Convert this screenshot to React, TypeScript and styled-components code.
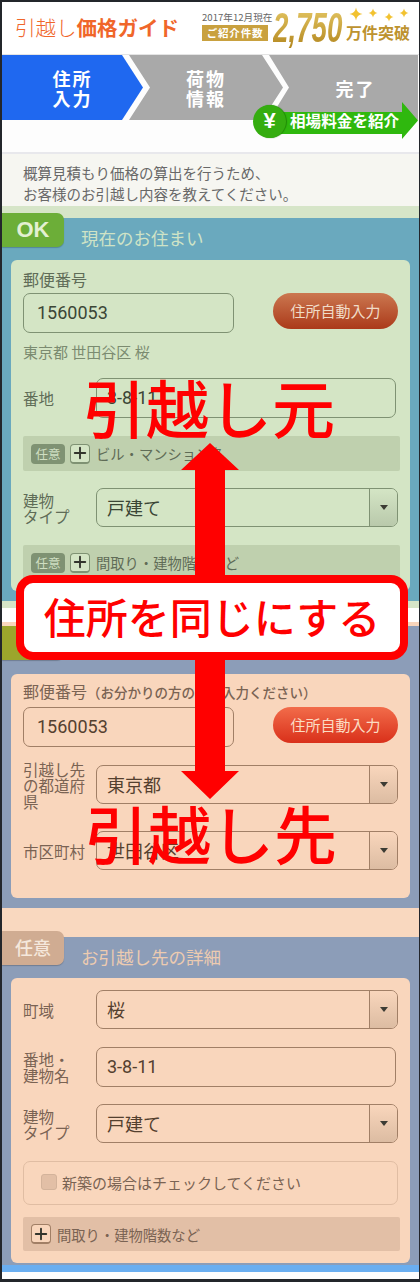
import React from "react";
import styled, { createGlobalStyle } from "styled-components";
import { Plus } from "lucide-react";

const GlobalStyle = createGlobalStyle`
  html, body {
    margin: 0;
    padding: 0;
    background: #ffffff;
  }
  * {
    box-sizing: border-box;
  }
`;

const JP = `"Noto Sans CJK JP", "Noto Sans", sans-serif`;

const tones = {
  green: `
    --card: #d4e5c5;
    --line: #7f9273;
    --ink: #5f6c57;
    --value: #3b4636;
    --bar: #bfd0ae;
    --chip: #7f9273;
    --chip-ink: #cfdfc2;
    --btn: linear-gradient(#cb7750, #ab3a1a);
    --btn-ink: #f0dcc8;
    --arrow: linear-gradient(#d4e5c5, #b9c9ab);
  `,
  peach: `
    --card: #f9d6bc;
    --line: #a17f66;
    --ink: #7a6353;
    --value: #54402f;
    --bar: #e2bfa6;
    --chip: #a17f66;
    --chip-ink: #f9d6bc;
    --btn: linear-gradient(#f26c4a, #d9301a);
    --btn-ink: #fbdcc4;
    --arrow: linear-gradient(#f9d6bc, #dcbca2);
  `,
};

const Page = styled.div`
  position: relative;
  width: 420px;
  height: 1282px;
  border: solid #23262b;
  border-width: 2px 1px 3px 2px;
  background: #fdfdfd;
  font-family: ${JP};
  overflow: hidden;
`;

const Header = styled.header`
  display: flex;
  align-items: flex-start;
  height: 53px;
  background: #ffffff;
  border-bottom: 1px solid #e4e4e4;
`;

const Logo = styled.div`
  margin: 12px 0 0 13px;
  width: 187px;
  font-size: 20.5px;
  line-height: 26px;
  font-weight: 300;
  color: #f0662a;
  white-space: nowrap;
  b {
    font-weight: 700;
  }
`;

const DateBlock = styled.div`
  display: flex;
  flex-direction: column;
  width: 66px;
`;

const AsOf = styled.span`
  margin-top: 8px;
  height: 15px;
  font-size: 9.6px;
  line-height: 15px;
  color: #666666;
  white-space: nowrap;
`;

const GoldTag = styled.span`
  height: 16px;
  background: #c9a13f;
  color: #ffffff;
  font-size: 10.5px;
  line-height: 16px;
  font-weight: 700;
  text-align: center;
  letter-spacing: 0.8px;
  white-space: nowrap;
`;

const BigCount = styled.div`
  flex: none;
  width: 106px;
  margin: 6px -33px 0 5px;
  font-family: "Liberation Sans", sans-serif;
  font-size: 42px;
  line-height: 40px;
  font-weight: 700;
  font-style: italic;
  white-space: nowrap;
  transform: scaleX(0.66);
  transform-origin: left center;
  background: linear-gradient(#e3c562, #b3871f);
  -webkit-background-clip: text;
  background-clip: text;
  color: transparent;
`;

const CountSide = styled.div`
  display: flex;
  flex-direction: column;
`;

const Stars = styled.svg`
  display: block;
  width: 68px;
  height: 15px;
  margin-top: 5px;
`;

const CountUnit = styled.span`
  font-size: 16px;
  line-height: 20px;
  font-weight: 700;
  color: #bd932f;
  white-space: nowrap;
`;

const Steps = styled.nav`
  display: flex;
  height: 65px;
`;

const Step = styled.div<{ $active?: boolean; $width: number; $first?: boolean; $last?: boolean }>`
  display: flex;
  align-items: center;
  justify-content: center;
  flex: none;
  width: ${(p) => p.$width}px;
  margin-left: ${(p) => (p.$first ? 0 : -14)}px;
  padding-left: ${(p) => (p.$last ? 24 : 0)}px;
  background: ${(p) => (p.$active ? "#1f68f0" : "#a9a9a9")};
  color: #ffffff;
  font-size: 18px;
  line-height: 20px;
  font-weight: 700;
  letter-spacing: 2px;
  text-align: center;
  clip-path: ${(p) =>
    p.$first
      ? "polygon(0 0, calc(100% - 21px) 0, 100% 50%, calc(100% - 21px) 100%, 0 100%)"
      : p.$last
        ? "polygon(0 0, 100% 0, 100% 100%, 0 100%, 20px 50%)"
        : "polygon(0 0, calc(100% - 21px) 0, 100% 50%, calc(100% - 21px) 100%, 0 100%, 21px 50%)"};
`;

const PriceBadge = styled.div`
  position: absolute;
  left: 251px;
  top: 100px;
  width: 165px;
  height: 37px;
`;

const PriceArrow = styled.div`
  position: absolute;
  left: 14px;
  top: 0;
  width: 151px;
  height: 37px;
  padding: 0 0 0 23px;
  background: #2fb80e;
  color: #ffffff;
  font-size: 15.6px;
  font-weight: 700;
  line-height: 37px;
  white-space: nowrap;
  clip-path: polygon(0 10px, 135px 10px, 135px 0, 100% 50%, 135px 100%, 135px 32px, 0 32px);
`;

const Yen = styled.div`
  position: absolute;
  left: 0;
  top: 3px;
  width: 33px;
  height: 33px;
  border-radius: 50%;
  background: #35ad10;
  box-shadow: 1px 0 1px #1f8a06;
  color: #ffffff;
  font-family: "Liberation Sans", sans-serif;
  font-size: 22px;
  font-weight: 700;
  line-height: 32px;
  text-align: center;
`;

const Spacer = styled.div`
  height: 34px;
  border-bottom: 2px solid #e8e8ec;
`;

const Intro = styled.p`
  margin: 0;
  height: 52px;
  padding: 8px 0 0 21px;
  background: #f6f6f1;
  color: #686868;
  font-size: 14.5px;
  line-height: 21px;
  white-space: nowrap;
`;

const Band = styled.div<{ $color: string; $height: number }>`
  height: ${(p) => p.$height}px;
  background: ${(p) => p.$color};
`;

const Section = styled.section<{ $color: string; $bottom: number }>`
  background: ${(p) => p.$color};
  padding: 0 9px ${(p) => p.$bottom}px;
`;

const SectionHead = styled.div<{ $height: number }>`
  display: flex;
  height: ${(p) => p.$height}px;
  margin-left: -9px;
`;

const Tab = styled.div<{ $color: string; $ink: string; $lift: number }>`
  flex: none;
  width: 62px;
  height: 34px;
  margin-top: ${(p) => -p.$lift}px;
  border-radius: 0 7px 7px 0;
  background: ${(p) => p.$color};
  box-shadow: 0 1px 1px rgba(0, 0, 0, 0.2);
  color: ${(p) => p.$ink};
  font-size: 18px;
  font-weight: 500;
  line-height: 32px;
  text-align: center;
  position: relative;
  z-index: 1;
`;

const OkMark = styled.span`
  font-family: "Liberation Sans", sans-serif;
  font-size: 22px;
  font-weight: 700;
`;

const SectionTitle = styled.h2<{ $ink: string }>`
  margin: 8px 0 0 17px;
  color: ${(p) => p.$ink};
  font-size: 17.5px;
  font-weight: 400;
  line-height: 24px;
  white-space: nowrap;
`;

const Card = styled.div<{ $tone: keyof typeof tones; $top: number; $bottom: number }>`
  ${(p) => tones[p.$tone]}
  padding: ${(p) => p.$top}px 10px ${(p) => p.$bottom}px 12px;
  border-radius: 6px;
  background: var(--card);
  color: var(--ink);
`;

const FieldLabel = styled.div`
  height: 20px;
  font-size: 16px;
  line-height: 20px;
  white-space: nowrap;
  small {
    font-size: 13.5px;
    font-weight: 500;
  }
`;

const ZipRow = styled.div<{ $top: number }>`
  display: flex;
  justify-content: space-between;
  align-items: flex-start;
  margin-top: ${(p) => p.$top}px;
  padding-right: 2px;
`;

const TextBox = styled.div<{ $zip?: boolean }>`
  flex: ${(p) => (p.$zip ? "none" : "1")};
  width: ${(p) => (p.$zip ? "211px" : "auto")};
  height: 40px;
  margin-right: ${(p) => (p.$zip ? 0 : 4)}px;
  padding-left: ${(p) => (p.$zip ? 13 : 10)}px;
  border: 1.5px solid var(--line);
  border-radius: 7px;
  color: var(--value);
  font-family: Roboto, sans-serif;
  font-size: 18px;
  line-height: 38px;
`;

const AutoButton = styled.button`
  width: 125px;
  height: 36px;
  padding: 0;
  border: none;
  border-radius: 18px;
  background: var(--btn);
  color: var(--btn-ink);
  font-family: ${JP};
  font-size: 15px;
  line-height: 32px;
`;

const Resolved = styled.div`
  margin-top: 9px;
  height: 20px;
  font-size: 15px;
  line-height: 20px;
  color: #7b8b70;
  white-space: nowrap;
`;

const Row = styled.div<{ $top: number }>`
  display: grid;
  grid-template-columns: 73px 1fr;
  align-items: center;
  margin-top: ${(p) => p.$top}px;
`;

const RowLabel = styled.div`
  margin: -6px 0;
  font-size: 15.5px;
  line-height: 16px;
  white-space: pre-line;
`;

const SelectBox = styled.div`
  display: flex;
  height: 39px;
  margin-right: 2px;
  border: 1.5px solid var(--line);
  border-radius: 7px;
  overflow: hidden;
  color: var(--value);
  font-size: 18px;
  line-height: 36px;
`;

const SelectValue = styled.span`
  flex: 1;
  padding-left: 10px;
`;

const SelectArrow = styled.span`
  display: flex;
  align-items: center;
  justify-content: center;
  width: 28px;
  border-left: 1.5px solid var(--line);
  background: var(--arrow);
  &::after {
    content: "";
    border-style: solid;
    border-width: 5px 4.5px 0;
    border-color: #3c3c34 transparent transparent;
  }
`;

const Bar = styled.div<{ $top: number; $height: number }>`
  display: flex;
  align-items: center;
  height: ${(p) => p.$height}px;
  margin-top: ${(p) => p.$top}px;
  padding-left: 8px;
  border-radius: 2px;
  background: var(--bar);
  font-size: 14.3px;
  white-space: nowrap;
`;

const Chip = styled.span`
  width: 34px;
  height: 20px;
  margin-right: 5px;
  border-radius: 4px;
  background: var(--chip);
  color: var(--chip-ink);
  font-size: 12.5px;
  line-height: 19px;
  text-align: center;
`;

const PlusButton = styled.span`
  display: flex;
  align-items: center;
  justify-content: center;
  width: 20px;
  height: 20px;
  margin-right: 6px;
  border: 1px solid var(--line);
  border-bottom-width: 2px;
  border-radius: 4px;
  background: var(--card);
  color: #33352d;
`;

const CheckPanel = styled.label`
  display: flex;
  align-items: center;
  height: 44px;
  margin: 18px 2px 0 0;
  padding: 0 0 2px 17px;
  border: 1px solid #e0bda3;
  border-radius: 7px;
  font-size: 15px;
  white-space: nowrap;
`;

const CheckBox = styled.span`
  width: 16px;
  height: 16px;
  margin-right: 5px;
  border: 1px solid #d3b39b;
  border-radius: 3px;
  background: #e2bfa6;
`;

const Overlay = styled.div`
  position: absolute;
  inset: -2px 0 0 -2px;
  z-index: 2;
  pointer-events: none;
  color: #ff0000;
`;

const DoubleArrow = styled.svg`
  position: absolute;
  left: 181px;
  top: 443px;
  width: 58px;
  height: 356px;
`;

const BigWord = styled.div<{ $left: number; $top: number }>`
  position: absolute;
  left: ${(p) => p.$left}px;
  top: ${(p) => p.$top}px;
  font-size: 63px;
  font-weight: 500;
  line-height: 70px;
  white-space: nowrap;
`;

const SameBox = styled.div`
  position: absolute;
  left: 16px;
  top: 575px;
  width: 392px;
  height: 85px;
  border: 8px solid #ff0000;
  border-radius: 17px;
  background: #ffffff;
  font-size: 42px;
  font-weight: 500;
  line-height: 65px;
  text-align: center;
  white-space: nowrap;
`;

const star = (x: number, y: number, r: number) =>
  `M${x} ${y - r}Q${x + 0.8} ${y - 0.8} ${x + r} ${y}Q${x + 0.8} ${y + 0.8} ${x} ${y + r}Q${x - 0.8} ${y + 0.8} ${x - r} ${y}Q${x - 0.8} ${y - 0.8} ${x} ${y - r}Z`;

const App = () => {
  return (
    <Page>
      <GlobalStyle />
      <Header>
        <Logo>
          引越し<b>価格ガイド</b>
        </Logo>
        <DateBlock>
          <AsOf>2017年12月現在</AsOf>
          <GoldTag>ご紹介件数</GoldTag>
        </DateBlock>
        <BigCount>2,750</BigCount>
        <CountSide>
          <Stars viewBox="0 0 68 15">
            <path d={star(10, 7, 6.5)} fill="#f2c230" />
            <path d={star(27, 6, 4.5)} fill="#f2c230" />
            <path d={star(43, 10, 4.5)} fill="#f2c230" />
            <path d={star(58, 6, 4.5)} fill="#f2c230" />
          </Stars>
          <CountUnit>万件突破</CountUnit>
        </CountSide>
      </Header>

      <Steps>
        <Step $active $first $width={141}>
          住所
          <br />
          入力
        </Step>
        <Step $width={154}>
          荷物
          <br />
          情報
        </Step>
        <Step $last $width={149}>
          完了
        </Step>
      </Steps>
      <PriceBadge>
        <PriceArrow>相場料金を紹介</PriceArrow>
        <Yen>¥</Yen>
      </PriceBadge>

      <Spacer />
      <Intro>
        概算見積もり価格の算出を行うため、
        <br />
        お客様のお引越し内容を教えてください。
      </Intro>
      <Band $color="#d6e5c8" $height={12} />

      <Section $color="#6aa9be" $bottom={10}>
        <SectionHead $height={42}>
          <Tab $color="#6cae38" $ink="#e3f0d2" $lift={5}>
            <OkMark>OK</OkMark>
          </Tab>
          <SectionTitle $ink="#cfe3c6">現在のお住まい</SectionTitle>
        </SectionHead>
        <Card $tone="green" $top={9} $bottom={11}>
          <FieldLabel>郵便番号</FieldLabel>
          <ZipRow $top={4}>
            <TextBox $zip>1560053</TextBox>
            <AutoButton>住所自動入力</AutoButton>
          </ZipRow>
          <Resolved>東京都 世田谷区 桜</Resolved>
          <Row $top={16}>
            <RowLabel>番地</RowLabel>
            <TextBox>3-8-11</TextBox>
          </Row>
          <Bar $top={18} $height={35}>
            <Chip>任意</Chip>
            <PlusButton>
              <Plus size={18} strokeWidth={2.5} />
            </PlusButton>
            ビル・マンション名
          </Bar>
          <Row $top={17}>
            <RowLabel>{"建物\nタイプ"}</RowLabel>
            <SelectBox>
              <SelectValue>戸建て</SelectValue>
              <SelectArrow />
            </SelectBox>
          </Row>
          <Bar $top={18} $height={35}>
            <Chip>任意</Chip>
            <PlusButton>
              <Plus size={18} strokeWidth={2.5} />
            </PlusButton>
            間取り・建物階数など
          </Bar>
        </Card>
      </Section>

      <Band $color="#d6e5c8" $height={7} />
      <Band $color="#ffffff" $height={14} />
      <Band $color="#f9d6bc" $height={4} />

      <Section $color="#8c9db8" $bottom={10}>
        <SectionHead $height={48}>
          <Tab $color="#9ca62c" $ink="#e3e6b8" $lift={0}>
            OK
          </Tab>
          <SectionTitle $ink="#f2d3bc">お引越し先</SectionTitle>
        </SectionHead>
        <Card $tone="peach" $top={7} $bottom={28}>
          <FieldLabel>
            郵便番号<small>（お分かりの方のみご入力ください）</small>
          </FieldLabel>
          <ZipRow $top={6}>
            <TextBox $zip>1560053</TextBox>
            <AutoButton>住所自動入力</AutoButton>
          </ZipRow>
          <Row $top={18}>
            <RowLabel>{"引越し先\nの都道府\n県"}</RowLabel>
            <SelectBox>
              <SelectValue>東京都</SelectValue>
              <SelectArrow />
            </SelectBox>
          </Row>
          <Row $top={27}>
            <RowLabel>市区町村</RowLabel>
            <SelectBox>
              <SelectValue>世田谷区</SelectValue>
              <SelectArrow />
            </SelectBox>
          </Row>
        </Card>
      </Section>

      <Band $color="#f9d8bf" $height={29} />

      <Section $color="#8c9db8" $bottom={2}>
        <SectionHead $height={41}>
          <Tab $color="#d0ac92" $ink="#f5e8dc" $lift={6}>
            任意
          </Tab>
          <SectionTitle $ink="#eccbb0">お引越し先の詳細</SectionTitle>
        </SectionHead>
        <Card $tone="peach" $top={12} $bottom={12}>
          <Row $top={0}>
            <RowLabel>町域</RowLabel>
            <SelectBox>
              <SelectValue>桜</SelectValue>
              <SelectArrow />
            </SelectBox>
          </Row>
          <Row $top={18}>
            <RowLabel>{"番地・\n建物名"}</RowLabel>
            <TextBox>3-8-11</TextBox>
          </Row>
          <Row $top={17}>
            <RowLabel>{"建物\nタイプ"}</RowLabel>
            <SelectBox>
              <SelectValue>戸建て</SelectValue>
              <SelectArrow />
            </SelectBox>
          </Row>
          <CheckPanel>
            <CheckBox />
            新築の場合はチェックしてください
          </CheckPanel>
          <Bar $top={12} $height={34}>
            <PlusButton>
              <Plus size={18} strokeWidth={2.5} />
            </PlusButton>
            間取り・建物階数など
          </Bar>
        </Card>
      </Section>
      <Band $color="#6aaef0" $height={7} />

      <Overlay>
        <DoubleArrow viewBox="0 0 58 356">
          <path d="M29 0L58 27H44V328H58L29 356L0 328H14V27H0Z" fill="#ff0000" />
        </DoubleArrow>
        <BigWord $left={83} $top={371}>
          引越し元
        </BigWord>
        <BigWord $left={85} $top={797}>
          引越し先
        </BigWord>
        <SameBox>住所を同じにする</SameBox>
      </Overlay>
    </Page>
  );
};

export default App;
